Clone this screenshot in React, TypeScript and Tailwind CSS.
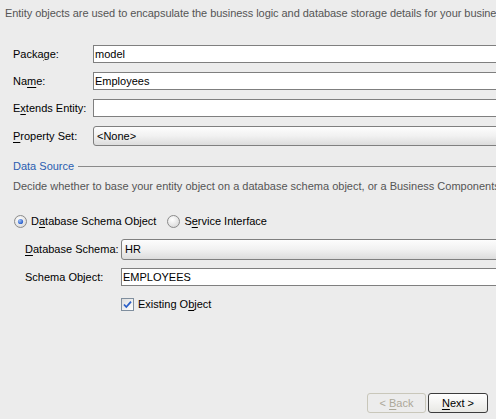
import React from 'react';

const font = { fontFamily: '"Liberation Sans", Arial, sans-serif' };

function U({ children }: { children: React.ReactNode }) {
  return <span className="underline underline-offset-[2px]">{children}</span>;
}

function TextField({ value, className = '' }: { value?: string; className?: string }) {
  return (
    <div className={`h-[18px] bg-white border border-[#7f7f7f] pl-[1px] leading-[16px] text-black ${className}`}>
      {value}
    </div>
  );
}

function Combo({ value, className = '' }: { value: string; className?: string }) {
  return (
    <div
      className={`h-[20px] border border-[#7f7f7f] rounded-l-[3px] bg-gradient-to-b from-[#fdfdfd] via-[#f1f1f1] to-[#dcdcdc] pl-[3px] leading-[18px] text-black ${className}`}
    >
      {value}
    </div>
  );
}

function Radio({ checked }: { checked?: boolean }) {
  return (
    <svg width="13" height="13" viewBox="0 0 13 13" className="shrink-0">
      <defs>
        <radialGradient id="rbg" cx="40%" cy="35%" r="70%">
          <stop offset="0%" stopColor="#ffffff" />
          <stop offset="100%" stopColor="#d8d8d8" />
        </radialGradient>
        <radialGradient id="rdot" cx="35%" cy="35%" r="70%">
          <stop offset="0%" stopColor="#9fc0f5" />
          <stop offset="100%" stopColor="#2359c8" />
        </radialGradient>
      </defs>
      <circle cx="6.5" cy="6.5" r="6" fill="url(#rbg)" stroke="#8a8a8a" />
      {checked && <circle cx="6.5" cy="6.5" r="2.6" fill="url(#rdot)" />}
    </svg>
  );
}

function Checkbox() {
  return (
    <svg width="13" height="13" viewBox="0 0 13 13" className="shrink-0">
      <defs>
        <linearGradient id="cbg" x1="0" y1="0" x2="1" y2="1">
          <stop offset="0%" stopColor="#dcdcdc" />
          <stop offset="100%" stopColor="#ffffff" />
        </linearGradient>
      </defs>
      <rect x="0.5" y="0.5" width="12" height="12" fill="url(#cbg)" stroke="#7f8e9e" />
      <path d="M3 6.5 L5.3 9 L10 3.6" fill="none" stroke="#2a5fc8" strokeWidth="1.8" />
    </svg>
  );
}

export default function App() {
  return (
    <div
      className="w-[496px] h-[419px] bg-[#ececec] overflow-hidden flex flex-col text-[11px] text-black"
      style={font}
    >
      <div className="pl-[5px] pt-[6px] leading-[14px] text-[#555] whitespace-nowrap tracking-[-0.05px]">
        Entity objects are used to encapsulate the business logic and database storage details for your business
      </div>

      <div className="mt-[25px] grid grid-cols-[80px_420px] gap-y-[9px] pl-[13px] items-center whitespace-nowrap">
        <div>
          Packa<U>g</U>e:
        </div>
        <TextField value="model" />
        <div>
          Na<U>m</U>e:
        </div>
        <TextField value="Employees" />
        <div>
          E<U>x</U>tends Entity:
        </div>
        <TextField />
        <div>
          <U>P</U>roperty Set:
        </div>
        <Combo value="<None>" />
      </div>

      <div className="mt-[13px] pl-[13px] flex items-center gap-[4px] h-[14px]">
        <span className="text-[#2a5db0] whitespace-nowrap">Data Source</span>
        <div className="flex-1 h-px bg-[#8a8a8a]" />
      </div>

      <div className="mt-[6px] pl-[13px] leading-[14px] text-[#555] whitespace-nowrap">
        Decide whether to base your entity object on a database schema object, or a Business Components service
      </div>

      <div className="mt-[21px] pl-[14px] flex items-center h-[14px] whitespace-nowrap">
        <Radio checked />
        <span className="ml-[4px]">
          D<U>a</U>tabase Schema Object
        </span>
        <span className="ml-[11px]">
          <Radio />
        </span>
        <span className="ml-[4px]">
          S<U>e</U>rvice Interface
        </span>
      </div>

      <div className="mt-[11px] grid grid-cols-[96px_400px] gap-y-[8px] pl-[25px] items-center whitespace-nowrap">
        <div>
          <U>D</U>atabase Schema:
        </div>
        <Combo value="HR" className="h-[21px]" />
        <div>Schema Object:</div>
        <TextField value="EMPLOYEES" />
        <div />
        <div className="flex items-center gap-[4px] mt-[2px]">
          <Checkbox />
          <span>
            Existing O<U>b</U>ject
          </span>
        </div>
      </div>

      <div className="mt-auto flex justify-end gap-[2px] pr-[8px] pb-[6px]">
        <div className="w-[59px] h-[20px] border border-[#c9c7ba] rounded-[3px] text-[#aca899] flex items-center justify-center">
          <span>
            &lt; <U>B</U>ack
          </span>
        </div>
        <div className="w-[60px] h-[20px] border border-[#3c3c3c] rounded-[3px] bg-gradient-to-b from-[#ffffff] to-[#e8e8e4] flex items-center justify-center">
          <span>
            <U>N</U>ext &gt;
          </span>
        </div>
      </div>
    </div>
  );
}
